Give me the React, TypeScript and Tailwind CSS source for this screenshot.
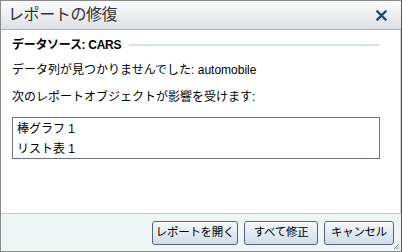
import React from 'react';

const font = { fontFamily: '"Liberation Sans", "Noto Sans CJK JP", sans-serif' };

const DialogButton: React.FC<{ label: string; width: string }> = ({ label, width }) => (
  <button
    className={`${width} h-[24px] rounded-[3px] border border-[#56657a] bg-gradient-to-b from-[#f4f8fb] to-[#cfdde8] text-[11.5px] tracking-[-0.3px] text-black leading-none shadow-[inset_0_1px_0_#ffffff] flex items-center justify-center`}
  >
    {label}
  </button>
);

const App: React.FC = () => {
  return (
    <div className="w-[402px] h-[252px] bg-white border border-[#8a8a8a] border-r-[#555] flex flex-col" style={font}>
      {/* Title bar */}
      <div className="h-[29px] shrink-0 flex items-center justify-between pl-[7px] pr-[14px] bg-gradient-to-b from-[#fbfcfc] to-[#dde0e4] border-b border-[#a8abb0]">
        <span className="text-[16px] text-[#333] tracking-tight">レポートの修復</span>
        <svg width="11" height="11" viewBox="0 0 11 11">
          <path d="M1.5 1.5 L9.5 9.5 M9.5 1.5 L1.5 9.5" stroke="#1f4a78" strokeWidth="2.4" strokeLinecap="square" />
        </svg>
      </div>

      {/* Body */}
      <div className="flex-1 flex flex-col pl-[11px] pr-[20px] border-r border-[#cfd2d6]">
        <div className="flex items-center gap-[8px] mt-[8px] h-[14px]">
          <span className="text-[12px] font-bold text-black whitespace-nowrap tracking-[-0.3px]">データソース: CARS</span>
          <div className="flex-1 h-[2px] bg-[#d6e4e6]" />
        </div>
        <div className="mt-[11px] text-[12px] text-black leading-[14px]">データ列が見つかりませんでした: automobile</div>
        <div className="mt-[13px] text-[12px] text-black leading-[14px]">次のレポートオブジェクトが影響を受けます:</div>
        <div className="mt-[13px] h-[42px] border border-[#6d7283] flex flex-col px-[4px] pt-[1px] text-[12px] text-black leading-[20px]">
          <span>棒グラフ 1</span>
          <span>リスト表 1</span>
        </div>
      </div>

      {/* Footer */}
      <div className="relative h-[38px] shrink-0 bg-[#eef5f5] border-t border-[#c9cccf] flex items-center justify-end gap-[6px] pr-[7px]">
        <DialogButton label="レポートを開く" width="w-[86px]" />
        <DialogButton label="すべて修正" width="w-[74px]" />
        <DialogButton label="キャンセル" width="w-[70px]" />
        <svg className="absolute right-[1px] bottom-[1px]" width="8" height="8" viewBox="0 0 8 8">
          <path d="M7 2 L2 7 M7 4.5 L4.5 7 M7 6.5 L6.5 7" stroke="#7a7f86" strokeWidth="1" />
        </svg>
      </div>
    </div>
  );
};

export default App;
